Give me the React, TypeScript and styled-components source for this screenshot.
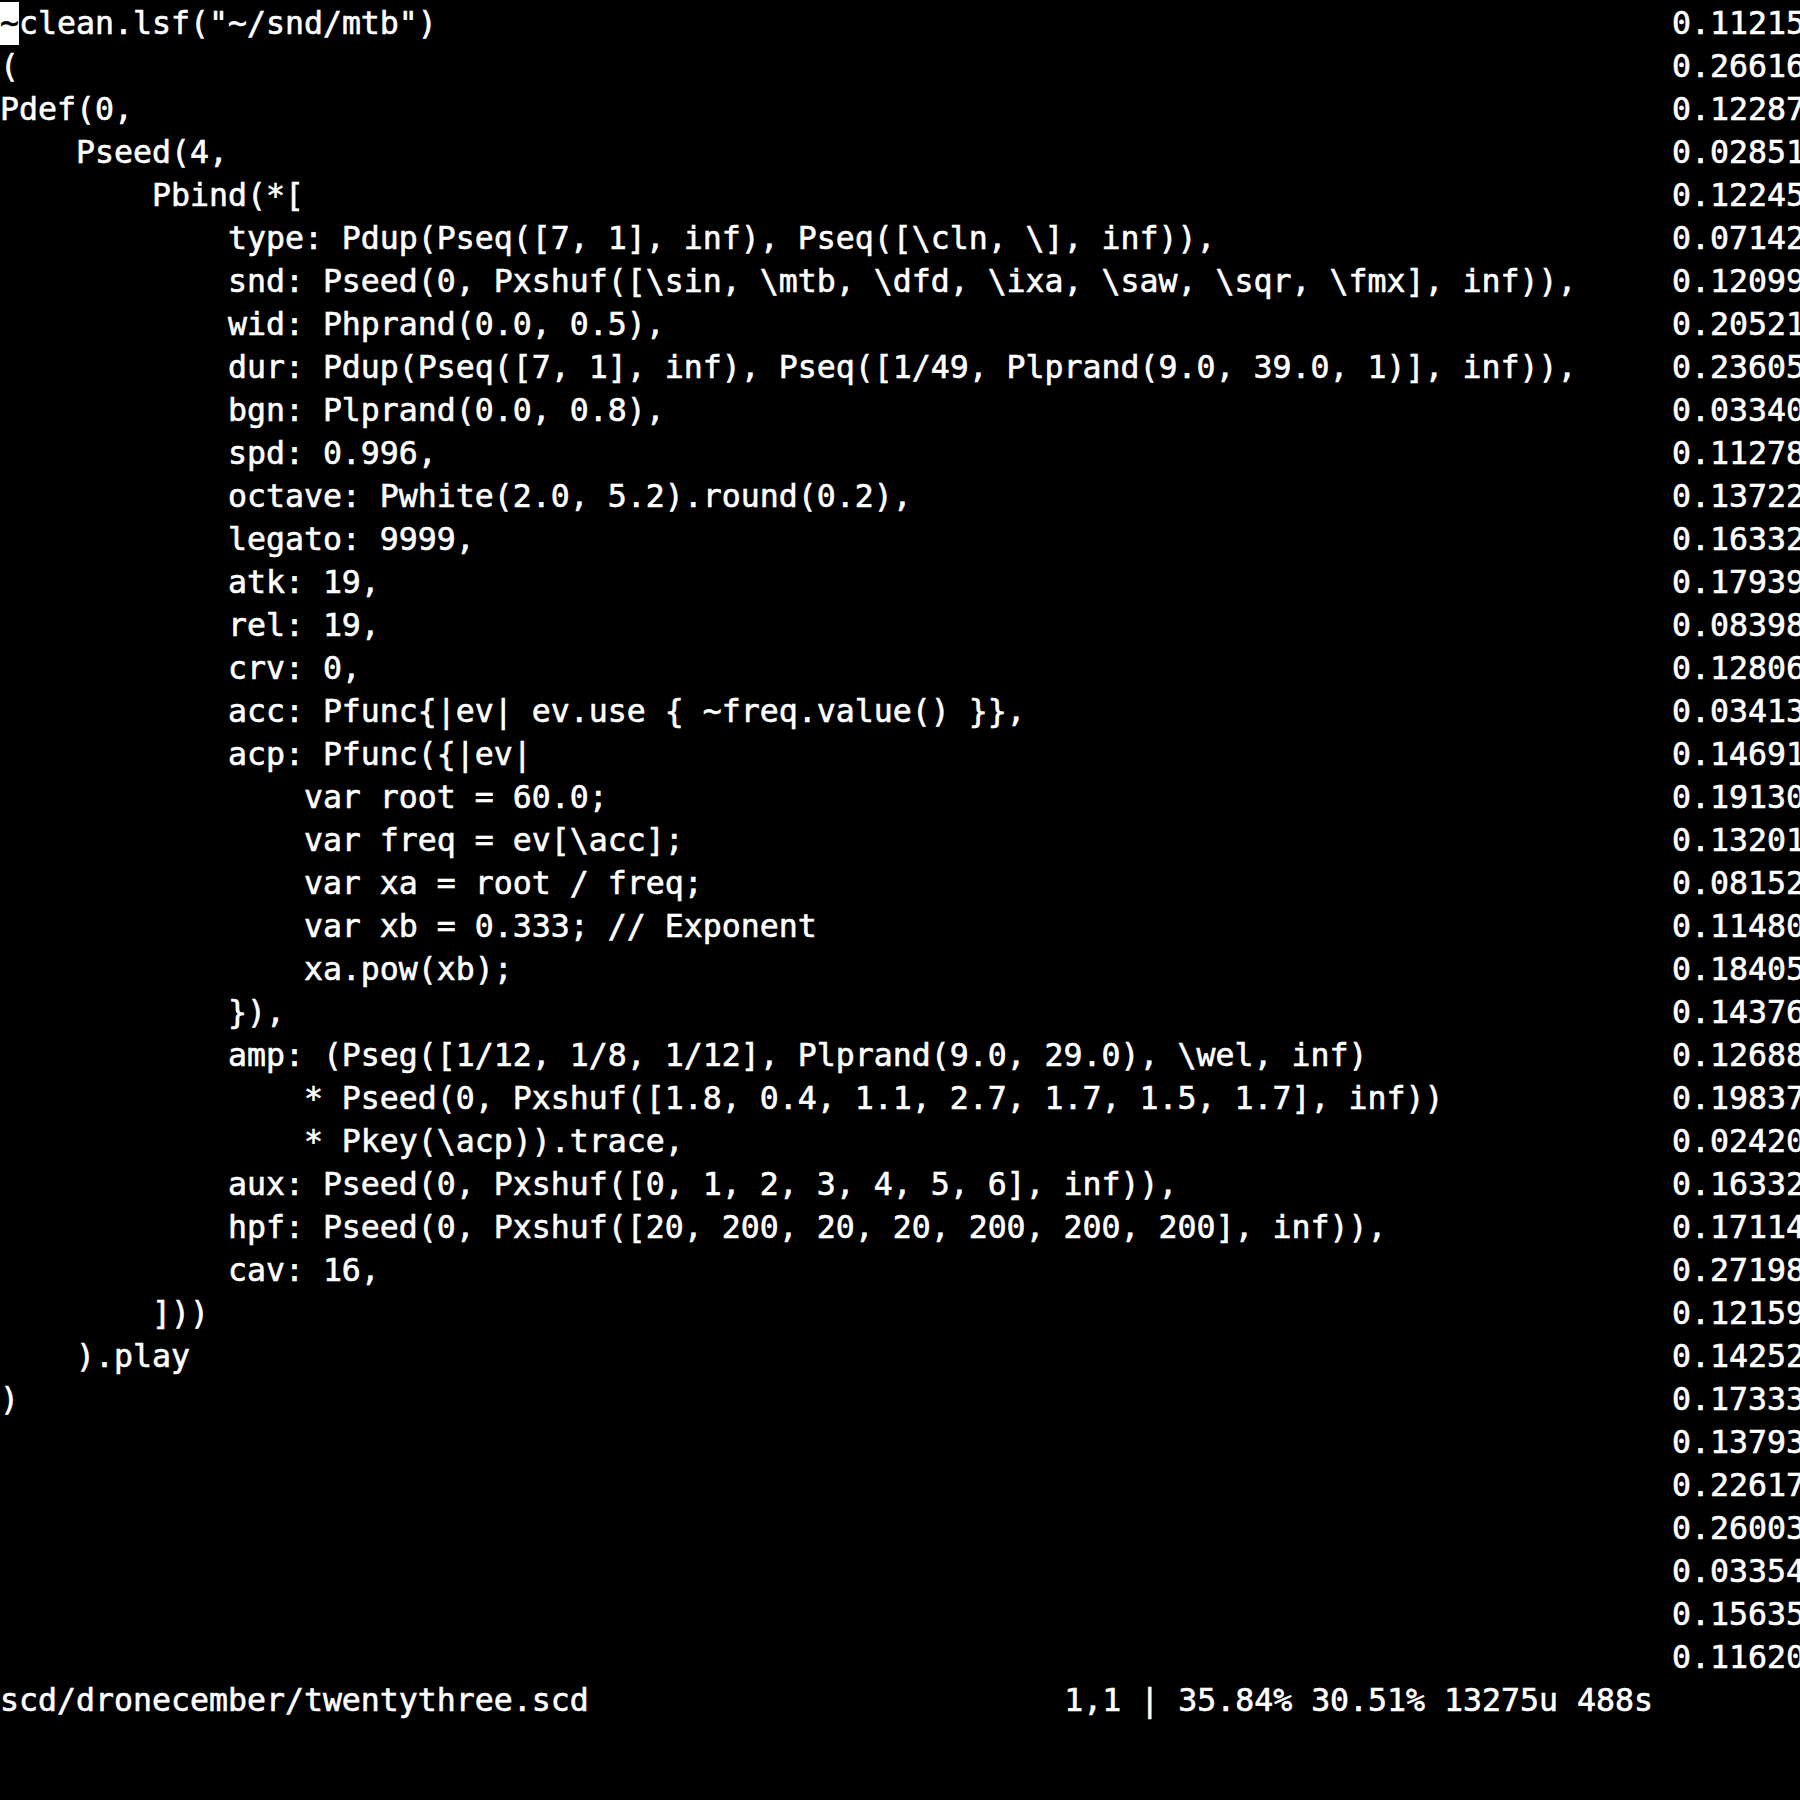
import React from "react";
import styled, { createGlobalStyle } from "styled-components";

const GlobalStyle = createGlobalStyle`
  html, body {
    margin: 0;
    padding: 0;
    background: #000;
  }
  #root {
    background: #000;
    min-height: 1800px;
  }
`;

const CHAR = 19;
const ROW = 43;

const Screen = styled.div`
  display: grid;
  grid-template-columns: ${88 * CHAR}px 1fr;
  width: 1800px;
  height: 1800px;
  overflow: hidden;
  background: #000;
  color: #fff;
  font-family: "DejaVu Sans Mono", "Liberation Mono", monospace;
  font-size: 31.56px;
  line-height: ${ROW}px;
  -webkit-text-stroke: 0.6px #fff;
`;

const Editor = styled.div`
  display: flex;
  flex-direction: column;
  min-width: 0;
  padding-top: 2px;
`;

const Line = styled.div`
  height: ${ROW}px;
  white-space: pre;
  overflow: hidden;
`;

const Cursor = styled.span`
  display: inline-block;
  width: ${CHAR}px;
  height: ${ROW + 2}px;
  margin-top: -2px;
  background: #fff;
  color: #000;
  -webkit-text-stroke: 0.6px #000;
  vertical-align: top;
  line-height: ${ROW + 4}px;
`;

const StatusLine = styled.div`
  display: flex;
  justify-content: space-between;
  height: ${ROW}px;
  padding-right: ${CHAR}px;
  white-space: pre;
`;

const Column = styled.div`
  display: flex;
  flex-direction: column;
  white-space: pre;
  overflow: hidden;
  padding-top: 2px;
`;

const Value = styled.div`
  height: ${ROW}px;
`;

const code: string[] = [
  "clean.lsf(\"~/snd/mtb\")",
  "(",
  "Pdef(0,",
  "    Pseed(4,",
  "        Pbind(*[",
  "            type: Pdup(Pseq([7, 1], inf), Pseq([\\cln, \\], inf)),",
  "            snd: Pseed(0, Pxshuf([\\sin, \\mtb, \\dfd, \\ixa, \\saw, \\sqr, \\fmx], inf)),",
  "            wid: Phprand(0.0, 0.5),",
  "            dur: Pdup(Pseq([7, 1], inf), Pseq([1/49, Plprand(9.0, 39.0, 1)], inf)),",
  "            bgn: Plprand(0.0, 0.8),",
  "            spd: 0.996,",
  "            octave: Pwhite(2.0, 5.2).round(0.2),",
  "            legato: 9999,",
  "            atk: 19,",
  "            rel: 19,",
  "            crv: 0,",
  "            acc: Pfunc{|ev| ev.use { ~freq.value() }},",
  "            acp: Pfunc({|ev|",
  "                var root = 60.0;",
  "                var freq = ev[\\acc];",
  "                var xa = root / freq;",
  "                var xb = 0.333; // Exponent",
  "                xa.pow(xb);",
  "            }),",
  "            amp: (Pseg([1/12, 1/8, 1/12], Plprand(9.0, 29.0), \\wel, inf)",
  "                * Pseed(0, Pxshuf([1.8, 0.4, 1.1, 2.7, 1.7, 1.5, 1.7], inf))",
  "                * Pkey(\\acp)).trace,",
  "            aux: Pseed(0, Pxshuf([0, 1, 2, 3, 4, 5, 6], inf)),",
  "            hpf: Pseed(0, Pxshuf([20, 200, 20, 20, 200, 200, 200], inf)),",
  "            cav: 16,",
  "        ]))",
  "    ).play",
  ")",
  "",
  "",
  "",
  "",
  "",
  "",
];

const values: string[] = [
  "0.11215", "0.26616", "0.12287", "0.02851", "0.12245", "0.07142",
  "0.12099", "0.20521", "0.23605", "0.03340", "0.11278", "0.13722",
  "0.16332", "0.17939", "0.08398", "0.12806", "0.03413", "0.14691",
  "0.19130", "0.13201", "0.08152", "0.11480", "0.18405", "0.14376",
  "0.12688", "0.19837", "0.02420", "0.16332", "0.17114", "0.27198",
  "0.12159", "0.14252", "0.17333", "0.13793", "0.22617", "0.26003",
  "0.03354", "0.15635", "0.11620",
];

export default function App() {
  return (
    <>
      <GlobalStyle />
      <Screen>
        <Editor>
          {code.map((text, i) => (
            <Line key={i}>
              {i === 0 ? (
                <>
                  <Cursor>~</Cursor>
                  {text}
                </>
              ) : (
                text || " "
              )}
            </Line>
          ))}
          <StatusLine>
            <span>scd/dronecember/twentythree.scd</span>
            <span>1,1 | 35.84% 30.51% 13275u 488s</span>
          </StatusLine>
        </Editor>
        <Column>
          {values.map((v, i) => (
            <Value key={i}>{v}</Value>
          ))}
        </Column>
      </Screen>
    </>
  );
}
